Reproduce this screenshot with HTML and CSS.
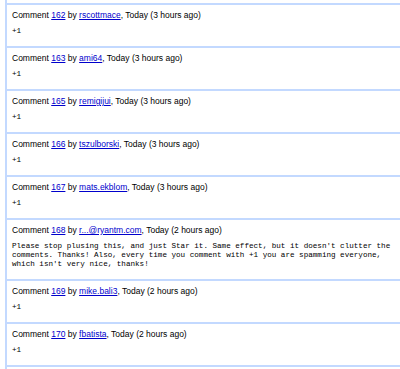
FILE: index.html
```html
<!DOCTYPE html>
<html lang="en">
<head>
    <meta charset="UTF-8">
    <title>Issue comments</title>
    <link rel="stylesheet" href="styles.css">
</head>
<body>
    <div class="issue">
        <div class="comment">
            <span class="author">Comment <a href="#c162">162</a> by <a href="#">rscottmace</a>, Today (3 hours ago)</span>
            <pre>+1</pre>
        </div>
        <div class="comment">
            <span class="author">Comment <a href="#c163">163</a> by <a href="#">ami64</a>, Today (3 hours ago)</span>
            <pre>+1</pre>
        </div>
        <div class="comment">
            <span class="author">Comment <a href="#c165">165</a> by <a href="#">remigijui</a>, Today (3 hours ago)</span>
            <pre>+1</pre>
        </div>
        <div class="comment">
            <span class="author">Comment <a href="#c166">166</a> by <a href="#">tszulborski</a>, Today (3 hours ago)</span>
            <pre>+1</pre>
        </div>
        <div class="comment">
            <span class="author">Comment <a href="#c167">167</a> by <a href="#">mats.ekblom</a>, Today (3 hours ago)</span>
            <pre>+1</pre>
        </div>
        <div class="comment">
            <span class="author">Comment <a href="#c168">168</a> by <a href="#">r...@ryantm.com</a>, Today (2 hours ago)</span>
            <pre>Please stop plusing this, and just Star it. Same effect, but it doesn't clutter the
comments. Thanks! Also, every time you comment with +1 you are spamming everyone,
which isn't very nice, thanks!</pre>
        </div>
        <div class="comment">
            <span class="author">Comment <a href="#c169">169</a> by <a href="#">mike.bali3</a>, Today (2 hours ago)</span>
            <pre>+1</pre>
        </div>
        <div class="comment">
            <span class="author">Comment <a href="#c170">170</a> by <a href="#">fbatista</a>, Today (2 hours ago)</span>
            <pre>+1</pre>
        </div>
        <div class="comment"></div>
    </div>
</body>
</html>
```

FILE: styles.css
```css
* {
  box-sizing: border-box;
}

body {
  margin: 0;
  font-family: "Liberation Sans", Arial, sans-serif;
  font-size: 8.5px;
  color: #000;
  background: #fff;
}

.issue {
  margin-left: 5px;
  padding-top: 3px;
  border-left: 2px solid #c3d9ff;
}

.comment {
  border-top: 2px solid #c3d9ff;
  padding: 5px 5px 10px 5px;
}

.author {
  display: block;
  line-height: 10px;
}

a {
  color: #0000cc;
}

pre {
  margin: 7px 0 0 0;
  font-family: "Liberation Mono", "Courier New", monospace;
  font-size: 7.6px;
  line-height: 9px;
  color: #000;
}
```
